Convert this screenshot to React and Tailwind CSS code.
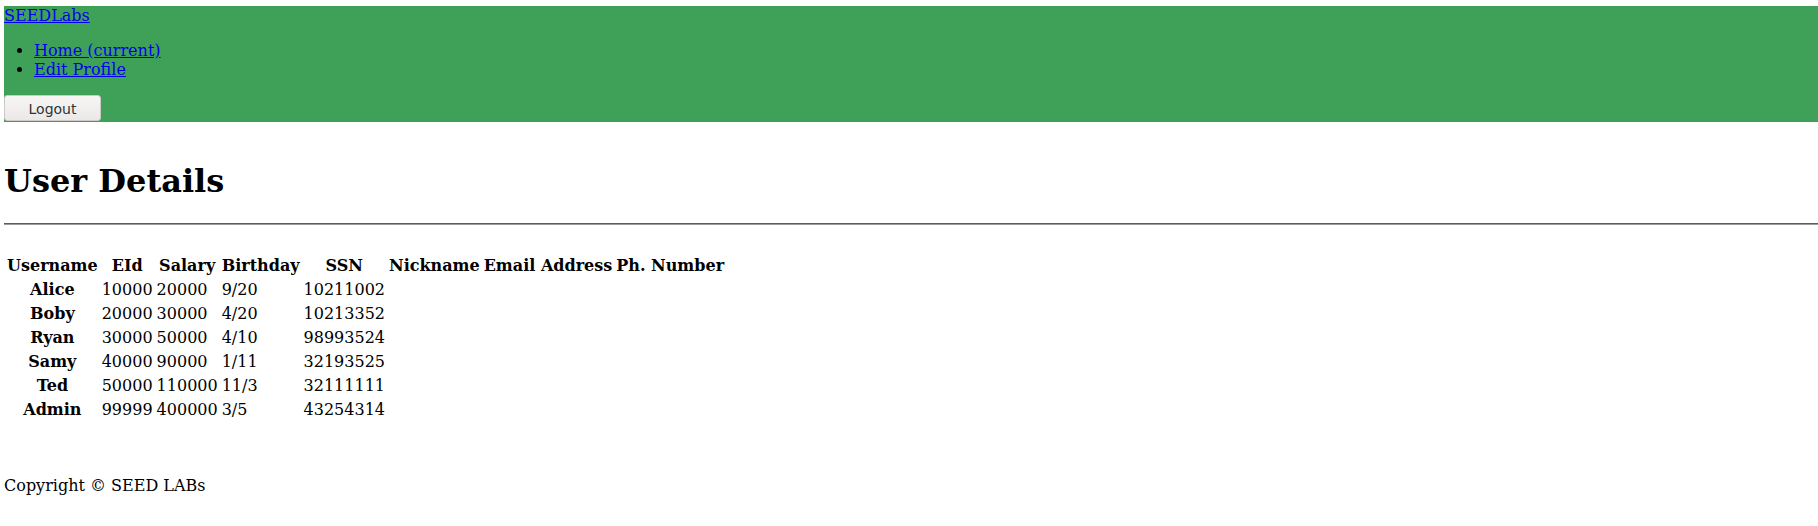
import React from 'react';

const users = [
  ['Alice', '10000', '20000', '9/20', '10211002'],
  ['Boby', '20000', '30000', '4/20', '10213352'],
  ['Ryan', '30000', '50000', '4/10', '98993524'],
  ['Samy', '40000', '90000', '1/11', '32193525'],
  ['Ted', '50000', '110000', '11/3', '32111111'],
  ['Admin', '99999', '400000', '3/5', '43254314'],
];

const headers = ['Username', 'EId', 'Salary', 'Birthday', 'SSN', 'Nickname', 'Email Address', 'Ph. Number'];

function App() {
  return (
    <div className="min-h-screen bg-white pl-1 pt-[6px] font-['DejaVu_Serif',serif] text-[16px] text-black">
      <nav className="bg-[#3fa058] pb-px">
        <a href="#" className="block leading-[19px] text-[#0000ee] underline">SEEDLabs</a>
        <ul className="my-4 list-disc pl-[30px]">
          <li className="leading-[19px]">
            <a href="#" className="text-[#0000ee] underline">Home (current)</a>
          </li>
          <li className="leading-[19px]">
            <a href="#" className="text-[#0000ee] underline">Edit Profile</a>
          </li>
        </ul>
        <button className="block h-[26px] w-[97px] rounded-[3px] border border-[#cdcac6] bg-gradient-to-b from-[#f7f6f5] to-[#ebe9e7] pt-[2px] font-['DejaVu_Sans',sans-serif] text-[14px] text-[#2e3436]">
          Logout
        </button>
      </nav>

      <h1 className="mt-[41px] text-[32px] font-bold leading-[37px]">User Details</h1>
      <div className="mt-[23px] border-t border-b border-t-[#5c5c5c] border-b-[#9a9a9a]" />

      <table className="mt-[28px] border-separate border-spacing-[2px]">
        <thead>
          <tr>
            {headers.map(h => (
              <th key={h} className="px-px py-px text-center font-bold leading-[20px]">{h}</th>
            ))}
          </tr>
        </thead>
        <tbody>
          {users.map(u => (
            <tr key={u[0]}>
              <th className="px-px py-px text-center font-bold leading-[20px]">{u[0]}</th>
              {u.slice(1).map((v, i) => (
                <td key={i} className="px-px py-px text-left leading-[20px]">{v}</td>
              ))}
              <td className="px-px py-px"></td>
              <td className="px-px py-px"></td>
              <td className="px-px py-px"></td>
            </tr>
          ))}
        </tbody>
      </table>

      <p className="mt-[53px] leading-[19px]">Copyright © SEED LABs</p>
    </div>
  );
}

export default App;
